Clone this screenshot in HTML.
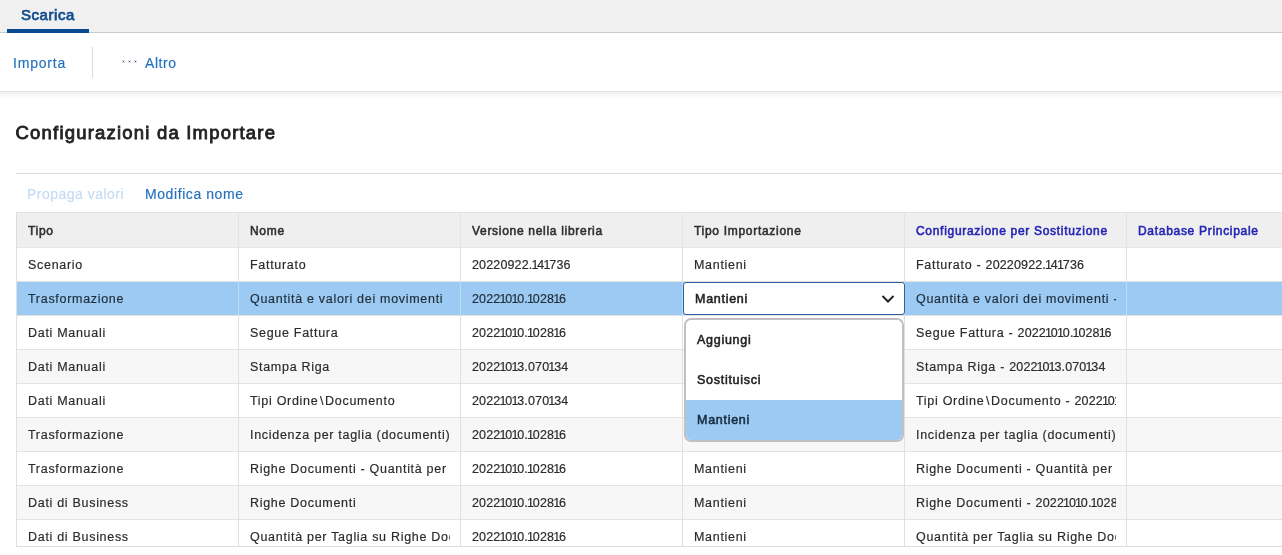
<!DOCTYPE html>
<html><head><meta charset="utf-8">
<style>
*{box-sizing:border-box;margin:0;padding:0}
html,body{width:1282px;height:555px;overflow:hidden;background:#fff;font-family:"Liberation Sans",sans-serif;color:#2b2b2b;-webkit-font-smoothing:antialiased}
.abs{position:absolute;white-space:nowrap}
.blk{position:absolute}
#clip{position:absolute;left:0;top:0;width:1282px;height:546px;overflow:hidden}
.th{position:absolute;white-space:nowrap;overflow:hidden;font-size:12px;line-height:15px;font-weight:400;color:#2f2f2f;letter-spacing:.7px;-webkit-text-stroke:.55px #2f2f2f}
.th.blue{color:#2424b6;-webkit-text-stroke:.55px #2424b6}
.td{position:absolute;white-space:nowrap;overflow:hidden;font-size:12.5px;line-height:15px;font-weight:400;color:#2b2b2b;letter-spacing:0.7px;-webkit-text-stroke:.18px #2b2b2b}
.td.sel{color:#1f2d3a;-webkit-text-stroke:.18px #1f2d3a}
.dd{position:absolute;white-space:nowrap;font-size:12.5px;line-height:15px;font-weight:400;color:#222;letter-spacing:.72px;-webkit-text-stroke:.55px #222}
.dg{letter-spacing:.15px}
.o{font-weight:400;letter-spacing:-1.1px;margin-left:-1px}
.tlink{font-size:14px;line-height:16px;color:#2270bf;-webkit-text-stroke:.15px #2270bf}
</style></head><body><div id="root" style="position:absolute;left:0;top:0;width:1282px;height:555px;will-change:transform">
<div class="blk" style="left:0;top:0;width:1282px;height:32px;background:#f0f0f0"></div>
<div class="blk" style="left:0;top:32px;width:1282px;height:1px;background:#c8c8c8"></div>
<div class="blk" style="left:7px;top:29px;width:82px;height:4px;background:#0a4a92"></div>
<div class="abs" style="left:21px;top:6px;font-size:15px;line-height:18px;font-weight:400;color:#124e8e;letter-spacing:.55px;-webkit-text-stroke:.75px #124e8e">Scarica</div>
<div class="blk" style="left:0;top:91px;width:1282px;height:1px;background:#e2e2e2"></div>
<div class="blk" style="left:0;top:92px;width:1282px;height:7px;background:linear-gradient(rgba(0,0,0,.055),rgba(0,0,0,0))"></div>
<div class="abs tlink" style="left:13px;top:55px;letter-spacing:.8px">Importa</div>
<div class="blk" style="left:92px;top:47px;width:1px;height:31px;background:#dcdcdc"></div>
<svg style="position:absolute;left:118px;top:56px" width="24" height="12" viewBox="0 0 24 12"><g stroke="#c0d4ec" stroke-width=".7"><path d="M4 4 L7 7 M7 4 L4 7"/><path d="M10 4 L13 7 M13 4 L10 7"/><path d="M16 4 L19 7 M19 4 L16 7"/></g><g fill="#3b4b66"><rect x="4.9" y="4.9" width="1.2" height="1.2"/><rect x="10.9" y="4.9" width="1.2" height="1.2"/><rect x="16.9" y="4.9" width="1.2" height="1.2"/></g></svg>
<div class="abs tlink" style="left:145px;top:55px;letter-spacing:.55px">Altro</div>
<div class="abs" style="left:15.5px;top:123px;font-size:18.5px;line-height:20px;font-weight:400;color:#232323;letter-spacing:1.2px;-webkit-text-stroke:.85px #232323">Configurazioni da Importare</div>
<div class="blk" style="left:16px;top:173px;width:1266px;height:1px;background:#d5d9de"></div>
<div class="abs" style="left:27px;top:186px;font-size:14px;line-height:16px;color:#c3dbf2;letter-spacing:.48px;-webkit-text-stroke:.15px #c3dbf2">Propaga valori</div>
<div class="abs" style="left:145px;top:186px;font-size:14px;line-height:16px;color:#2270bf;letter-spacing:.58px;-webkit-text-stroke:.15px #2270bf">Modifica nome</div>
<div id="clip">
<div class="blk" style="left:16px;top:212px;width:1266px;height:35px;background:#efefef"></div>
<div class="blk" style="left:16px;top:247px;width:1266px;height:34px;background:#ffffff"></div>
<div class="blk" style="left:16px;top:281px;width:1266px;height:34px;background:#9ccaf2"></div>
<div class="blk" style="left:16px;top:315px;width:1266px;height:34px;background:#ffffff"></div>
<div class="blk" style="left:16px;top:349px;width:1266px;height:34px;background:#f7f7f7"></div>
<div class="blk" style="left:16px;top:383px;width:1266px;height:34px;background:#ffffff"></div>
<div class="blk" style="left:16px;top:417px;width:1266px;height:34px;background:#f7f7f7"></div>
<div class="blk" style="left:16px;top:451px;width:1266px;height:34px;background:#ffffff"></div>
<div class="blk" style="left:16px;top:485px;width:1266px;height:34px;background:#f7f7f7"></div>
<div class="blk" style="left:16px;top:519px;width:1266px;height:34px;background:#ffffff"></div>
<div class="blk" style="left:16px;top:212px;width:1266px;height:1px;background:#e2e2e2"></div>
<div class="blk" style="left:16px;top:247px;width:1266px;height:1px;background:#e6e6e6"></div>
<div class="blk" style="left:16px;top:281px;width:1266px;height:1px;background:#e3e3e3"></div>
<div class="blk" style="left:16px;top:315px;width:1266px;height:1px;background:#e3e3e3"></div>
<div class="blk" style="left:16px;top:349px;width:1266px;height:1px;background:#e3e3e3"></div>
<div class="blk" style="left:16px;top:383px;width:1266px;height:1px;background:#e3e3e3"></div>
<div class="blk" style="left:16px;top:417px;width:1266px;height:1px;background:#e3e3e3"></div>
<div class="blk" style="left:16px;top:451px;width:1266px;height:1px;background:#e3e3e3"></div>
<div class="blk" style="left:16px;top:485px;width:1266px;height:1px;background:#e3e3e3"></div>
<div class="blk" style="left:16px;top:519px;width:1266px;height:1px;background:#e3e3e3"></div>
<div class="blk" style="left:16px;top:553px;width:1266px;height:1px;background:#e3e3e3"></div>
<div class="blk" style="left:16px;top:212px;width:1px;height:35px;background:#dcdcdc"></div>
<div class="blk" style="left:16px;top:247px;width:1px;height:306px;background:#e0e0e0"></div>
<div class="blk" style="left:238px;top:212px;width:1px;height:35px;background:#e4e4e4"></div>
<div class="blk" style="left:238px;top:247px;width:1px;height:306px;background:#e0e0e0"></div>
<div class="blk" style="left:238px;top:282px;width:1px;height:33px;background:#bfdcf5"></div>
<div class="blk" style="left:460px;top:212px;width:1px;height:35px;background:#e4e4e4"></div>
<div class="blk" style="left:460px;top:247px;width:1px;height:306px;background:#e0e0e0"></div>
<div class="blk" style="left:460px;top:282px;width:1px;height:33px;background:#bfdcf5"></div>
<div class="blk" style="left:682px;top:212px;width:1px;height:35px;background:#e4e4e4"></div>
<div class="blk" style="left:682px;top:247px;width:1px;height:306px;background:#e0e0e0"></div>
<div class="blk" style="left:682px;top:282px;width:1px;height:33px;background:#bfdcf5"></div>
<div class="blk" style="left:904px;top:212px;width:1px;height:35px;background:#e4e4e4"></div>
<div class="blk" style="left:904px;top:247px;width:1px;height:306px;background:#e0e0e0"></div>
<div class="blk" style="left:904px;top:282px;width:1px;height:33px;background:#bfdcf5"></div>
<div class="blk" style="left:1126px;top:212px;width:1px;height:35px;background:#e4e4e4"></div>
<div class="blk" style="left:1126px;top:247px;width:1px;height:306px;background:#e0e0e0"></div>
<div class="blk" style="left:1126px;top:282px;width:1px;height:33px;background:#bfdcf5"></div>
<div class="th" style="left:28px;top:223.5px;width:200px">Tipo</div>
<div class="th" style="left:250px;top:223.5px;width:200px">Nome</div>
<div class="th" style="left:472px;top:223.5px;width:200px">Versione nella libreria</div>
<div class="th" style="left:694px;top:223.5px;width:200px">Tipo Importazione</div>
<div class="th blue" style="left:916px;top:223.5px;width:200px">Configurazione per Sostituzione</div>
<div class="th blue" style="left:1138px;top:223.5px;width:200px">Database Principale</div>
<div class="td" style="left:28px;top:258px;width:200px">Scenario</div>
<div class="td" style="left:250px;top:258px;width:200px">Fatturato</div>
<div class="td" style="left:472px;top:258px;width:200px"><span class="dg">20220922.<b class="o">1</b>4<b class="o">1</b>736</span></div>
<div class="td" style="left:694px;top:258px;width:200px">Mantieni</div>
<div class="td" style="left:916px;top:258px;width:200px">Fatturato - <span class="dg">20220922.<b class="o">1</b>4<b class="o">1</b>736</span></div>
<div class="td sel" style="left:28px;top:292px;width:200px">Trasformazione</div>
<div class="td sel" style="left:250px;top:292px;width:200px">Quantità e valori dei movimenti</div>
<div class="td sel" style="left:472px;top:292px;width:200px"><span class="dg">2022<b class="o">1</b>0<b class="o">1</b>0.<b class="o">1</b>028<b class="o">1</b>6</span></div>
<div class="td sel" style="left:916px;top:292px;width:200px">Quantità e valori dei movimenti - <span class="dg">2022<b class="o">1</b>0<b class="o">1</b>0.<b class="o">1</b>028<b class="o">1</b>6</span></div>
<div class="td" style="left:28px;top:326px;width:200px">Dati Manuali</div>
<div class="td" style="left:250px;top:326px;width:200px">Segue Fattura</div>
<div class="td" style="left:472px;top:326px;width:200px"><span class="dg">2022<b class="o">1</b>0<b class="o">1</b>0.<b class="o">1</b>028<b class="o">1</b>6</span></div>
<div class="td" style="left:694px;top:326px;width:200px">Mantieni</div>
<div class="td" style="left:916px;top:326px;width:200px">Segue Fattura - <span class="dg">2022<b class="o">1</b>0<b class="o">1</b>0.<b class="o">1</b>028<b class="o">1</b>6</span></div>
<div class="td" style="left:28px;top:360px;width:200px">Dati Manuali</div>
<div class="td" style="left:250px;top:360px;width:200px">Stampa Riga</div>
<div class="td" style="left:472px;top:360px;width:200px"><span class="dg">2022<b class="o">1</b>0<b class="o">1</b>3.070<b class="o">1</b>34</span></div>
<div class="td" style="left:694px;top:360px;width:200px">Mantieni</div>
<div class="td" style="left:916px;top:360px;width:200px">Stampa Riga - <span class="dg">2022<b class="o">1</b>0<b class="o">1</b>3.070<b class="o">1</b>34</span></div>
<div class="td" style="left:28px;top:394px;width:200px">Dati Manuali</div>
<div class="td" style="left:250px;top:394px;width:200px">Tipi Ordine<span style="margin:0 1px 0 1.5px">\</span>Documento</div>
<div class="td" style="left:472px;top:394px;width:200px"><span class="dg">2022<b class="o">1</b>0<b class="o">1</b>3.070<b class="o">1</b>34</span></div>
<div class="td" style="left:694px;top:394px;width:200px">Mantieni</div>
<div class="td" style="left:916px;top:394px;width:200px">Tipi Ordine<span style="margin:0 1px 0 1.5px">\</span>Documento - <span class="dg">2022<b class="o">1</b>0<b class="o">1</b>3.070<b class="o">1</b>34</span></div>
<div class="td" style="left:28px;top:428px;width:200px">Trasformazione</div>
<div class="td" style="left:250px;top:428px;width:200px">Incidenza per taglia (documenti)</div>
<div class="td" style="left:472px;top:428px;width:200px"><span class="dg">2022<b class="o">1</b>0<b class="o">1</b>0.<b class="o">1</b>028<b class="o">1</b>6</span></div>
<div class="td" style="left:694px;top:428px;width:200px">Mantieni</div>
<div class="td" style="left:916px;top:428px;width:200px">Incidenza per taglia (documenti) - <span class="dg">2022<b class="o">1</b>0<b class="o">1</b>0.<b class="o">1</b>028<b class="o">1</b>6</span></div>
<div class="td" style="left:28px;top:462px;width:200px">Trasformazione</div>
<div class="td" style="left:250px;top:462px;width:200px">Righe Documenti - Quantità per Taglia</div>
<div class="td" style="left:472px;top:462px;width:200px"><span class="dg">2022<b class="o">1</b>0<b class="o">1</b>0.<b class="o">1</b>028<b class="o">1</b>6</span></div>
<div class="td" style="left:694px;top:462px;width:200px">Mantieni</div>
<div class="td" style="left:916px;top:462px;width:200px">Righe Documenti - Quantità per Taglia - <span class="dg">2022<b class="o">1</b>0<b class="o">1</b>0.<b class="o">1</b>028<b class="o">1</b>6</span></div>
<div class="td" style="left:28px;top:496px;width:200px">Dati di Business</div>
<div class="td" style="left:250px;top:496px;width:200px">Righe Documenti</div>
<div class="td" style="left:472px;top:496px;width:200px"><span class="dg">2022<b class="o">1</b>0<b class="o">1</b>0.<b class="o">1</b>028<b class="o">1</b>6</span></div>
<div class="td" style="left:694px;top:496px;width:200px">Mantieni</div>
<div class="td" style="left:916px;top:496px;width:200px">Righe Documenti - <span class="dg">2022<b class="o">1</b>0<b class="o">1</b>0.<b class="o">1</b>028<b class="o">1</b>6</span></div>
<div class="td" style="left:28px;top:530px;width:200px">Dati di Business</div>
<div class="td" style="left:250px;top:530px;width:200px">Quantità per Taglia su Righe Documenti</div>
<div class="td" style="left:472px;top:530px;width:200px"><span class="dg">2022<b class="o">1</b>0<b class="o">1</b>0.<b class="o">1</b>028<b class="o">1</b>6</span></div>
<div class="td" style="left:694px;top:530px;width:200px">Mantieni</div>
<div class="td" style="left:916px;top:530px;width:200px">Quantità per Taglia su Righe Documenti - <span class="dg">2022<b class="o">1</b>0<b class="o">1</b>0.<b class="o">1</b>028<b class="o">1</b>6</span></div>
</div>
<div class="blk" style="left:16px;top:546px;width:1266px;height:1px;background:#dedede"></div>
<!-- select -->
<div class="blk" style="left:683px;top:282px;width:222px;height:33px;background:#fff;border:1px solid #2f5f9c;border-radius:3px"></div>
<div class="dd" style="left:695px;top:292px">Mantieni</div>
<svg style="position:absolute;left:880px;top:293px" width="16" height="12" viewBox="0 0 16 12"><path d="M2.5 3 L8 8.5 L13.5 3" fill="none" stroke="#222" stroke-width="2"/></svg>
<!-- popup -->
<div class="blk" style="left:684px;top:318px;width:220px;height:124px;background:#fff;border:2px solid #c0c0c0;border-radius:7px;overflow:hidden">
  <div style="position:absolute;left:0;top:80px;width:100%;height:42px;background:#9ccaf2"></div>
</div>
<div class="dd" style="left:697px;top:333px">Aggiungi</div>
<div class="dd" style="left:697px;top:373px">Sostituisci</div>
<div class="dd" style="left:697px;top:413px;color:#182a40;-webkit-text-stroke:.55px #182a40">Mantieni</div>
</div></body></html>
